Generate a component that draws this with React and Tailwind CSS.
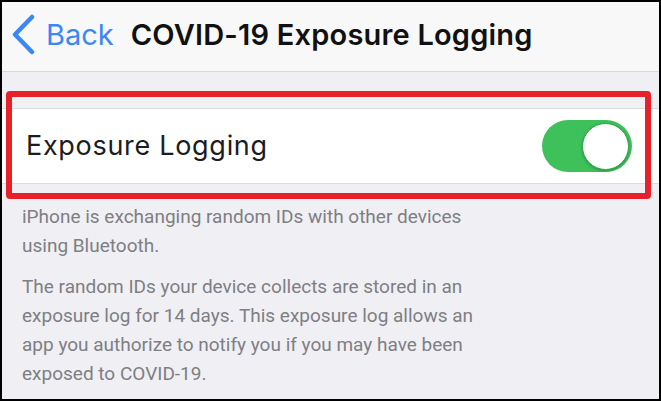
export default function App() {
  const font = { fontFamily: 'Inter, "Noto Sans", sans-serif' };
  return (
    <div className="w-[661px] h-[401px] overflow-hidden border-2 border-black bg-[#f0f0f4] flex flex-col" style={font}>
      <div className="h-[70px] shrink-0 bg-[#f8f8f9] border-b border-[#d8d8dc] flex items-center">
        <svg width="26" height="42" viewBox="0 0 26 42" className="ml-[8px] mt-[-4px]">
          <path d="M22 3 L5 20.5 L22 38" fill="none" stroke="#3a87f5" strokeWidth="4.5" strokeLinecap="round" strokeLinejoin="round" />
        </svg>
        <span className="ml-[10px] text-[29px] leading-none text-[#3a87f5] mt-[-4px]">Back</span>
        <span className="ml-[17px] text-[29px] leading-none font-semibold text-[#111] mt-[-4px] tracking-[0.2px]">COVID-19 Exposure Logging</span>
      </div>
      <div className="relative mt-[36px] h-[76px] bg-white border-y border-[#dcdce0] flex items-center justify-between shrink-0">
        <span className="ml-[24px] text-[27px] text-[#1c1c1e] tracking-[0.7px]">Exposure Logging</span>
        <div className="mr-[27px] w-[90px] h-[52px] rounded-full bg-[#3ec15a] flex items-center justify-end pr-[3px]">
          <div className="w-[47px] h-[47px] rounded-full bg-white border border-[#2fa84a] shadow-[0_1px_3px_rgba(0,0,0,0.25)]" />
        </div>
        <div className="absolute left-[4px] right-[8px] top-[-18px] bottom-[-16px] border-[6px] border-[#e8202a] rounded-[4px] pointer-events-none" />
      </div>
      <div className="w-[480px] pl-[20px] pt-[18px] text-[19px] leading-[29px] text-[#7e7e83]" style={{ fontFamily: 'Roboto, "Noto Sans", sans-serif' }}>
        <p>iPhone is exchanging random IDs with other devices using Bluetooth.</p>
        <p className="mt-[12px]">The random IDs your device collects are stored in an exposure log for 14 days. This exposure log allows an app you authorize to notify you if you may have been exposed to COVID-19.</p>
      </div>
    </div>
  );
}
